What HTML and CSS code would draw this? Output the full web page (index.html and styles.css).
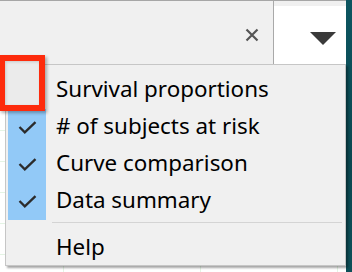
FILE: index.html
```html
<!DOCTYPE html>
<html>
<head>
<meta charset="utf-8">
<link rel="stylesheet" href="styles.css">
</head>
<body>
<div class="app">
  <div class="main">
    <div class="toolbar">
      <div class="tb-main">
        <svg class="close" width="14" height="14" viewBox="0 0 14 14"><path d="M1.5 1.5 L12.5 12.5 M12.5 1.5 L1.5 12.5" stroke="#555" stroke-width="2.2" fill="none"/></svg>
      </div>
      <div class="tb-drop">
        <svg class="tri" width="26" height="13" viewBox="0 0 26 13"><path d="M0 0 H26 L13 13 Z" fill="#3a3a3a"/></svg>
      </div>
    </div>
    <div class="content"></div>
  </div>
  <div class="edge"></div>

  <div class="menu">
    <div class="item"><span class="check"></span><span class="label">Survival proportions</span></div>
    <div class="item"><span class="check on"><svg width="19" height="13" viewBox="0 0 19 13"><path d="M1.5 6 L6.8 11.3 L17.5 1.2" stroke="#2b2b2b" stroke-width="2.3" fill="none"/></svg></span><span class="label"># of subjects at risk</span></div>
    <div class="item"><span class="check on"><svg width="19" height="13" viewBox="0 0 19 13"><path d="M1.5 6 L6.8 11.3 L17.5 1.2" stroke="#2b2b2b" stroke-width="2.3" fill="none"/></svg></span><span class="label">Curve comparison</span></div>
    <div class="item"><span class="check on"><svg width="19" height="13" viewBox="0 0 19 13"><path d="M1.5 6 L6.8 11.3 L17.5 1.2" stroke="#2b2b2b" stroke-width="2.3" fill="none"/></svg></span><span class="label">Data summary</span></div>
    <div class="sep"></div>
    <div class="item help"><span class="check"></span><span class="label">Help</span></div>
  </div>
  <div class="highlight"></div>
</div>
</body>
</html>
```
FILE: styles.css
```css
html, body {
  margin: 0;
  padding: 0;
}
body {
  width: 352px;
  height: 272px;
  overflow: hidden;
  background: #ffffff;
  font-family: "Noto Sans", "Open Sans", sans-serif;
}
.app {
  position: relative;
  display: flex;
  width: 352px;
  height: 272px;
}
.main {
  flex: 1;
  display: flex;
  flex-direction: column;
}
.toolbar {
  display: flex;
  height: 63px;
  border-top: 1px solid #a6a6a6;
  border-bottom: 1px solid #c9c9c9;
  background: #f0f0f0;
}
.tb-main {
  flex: 1;
  display: flex;
  justify-content: flex-end;
  align-items: flex-start;
  padding-top: 27px;
  padding-right: 14px;
  border-right: 1px solid #a9a9a9;
}
.close {
  display: block;
}
.tb-drop {
  width: 72px;
  margin-top: 5px;
  background: #ffffff;
  display: flex;
  justify-content: flex-start;
  padding-left: 36px;
  box-sizing: border-box;
}
.tri {
  display: block;
  margin-top: 26px;
}
.content {
  flex: 1;
  background-color: #ffffff;
  background-image:
    linear-gradient(#e4f4e4 1px, transparent 1px),
    linear-gradient(90deg, #e4f4e4 1px, transparent 1px);
  background-size: 137px 31px;
  background-position: 63px 3px;
}
.edge {
  width: 6px;
  background: linear-gradient(180deg, #0c5560, #0a4750 60%, #0d4f58);
}
.menu {
  position: absolute;
  left: 5px;
  top: 64px;
  width: 335px;
  height: 193px;
  background: #f0f0f0;
  border: 1px solid #c6c6c6;
  box-shadow: 2px 2px 2px rgba(0, 0, 0, 0.35);
  padding: 7px 2px 0 2px;
}
.item {
  display: flex;
  align-items: flex-start;
  height: 37px;
}
.item.help {
  height: 34px;
}
.check {
  width: 38px;
  height: 100%;
  display: flex;
  align-items: center;
  justify-content: center;
}
.check.on {
  background: #92c9f7;
}
.check svg {
  display: block;
}
.label {
  margin-left: 10px;
  font-size: 22.4px;
  color: #000000;
  line-height: 34px;
}
.sep {
  height: 1px;
  background: #d4d4d4;
  margin: 2px 1px 7px 44px;
}
.highlight {
  position: absolute;
  left: -1px;
  top: 55px;
  width: 34px;
  height: 44px;
  border: 6px solid #fd2b0c;
  background: #ebebeb;
  box-shadow: 2px 2px 3px rgba(0, 0, 0, 0.3), inset 1px 1px 3px rgba(0, 0, 0, 0.15);
}
```
